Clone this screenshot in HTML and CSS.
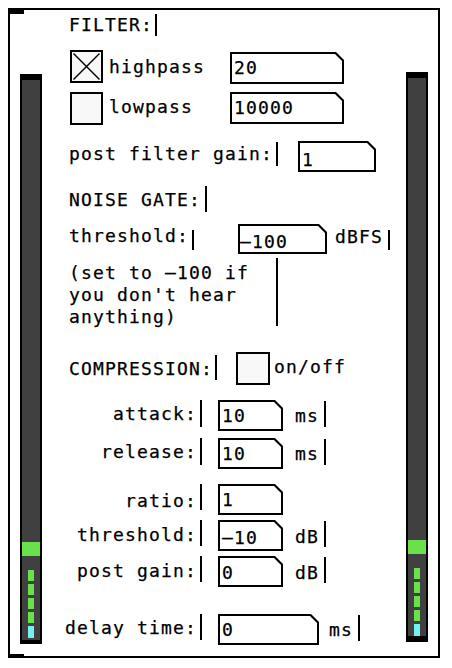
FILE: index.html
```html
<!DOCTYPE html>
<html>
<head>
<meta charset="utf-8">
<link rel="stylesheet" href="styles.css">
</head>
<body>
<div class="patch">
  <div class="frame"></div>

  <div class="vu vu-l">
    <div class="vu-peak"></div>
    <div class="vu-seg"></div>
    <div class="vu-seg"></div>
    <div class="vu-seg"></div>
    <div class="vu-seg"></div>
    <div class="vu-seg vu-low"></div>
  </div>
  <div class="vu vu-r">
    <div class="vu-peak"></div>
    <div class="vu-seg"></div>
    <div class="vu-seg"></div>
    <div class="vu-seg"></div>
    <div class="vu-seg"></div>
    <div class="vu-seg vu-low"></div>
  </div>

  <div class="cm c-filter">FILTER:</div>
  <div class="tg tg-hp"><svg viewBox="0 0 29 29" width="29" height="29"><line x1="1.5" y1="1.5" x2="27.5" y2="27.5"/><line x1="27.5" y1="1.5" x2="1.5" y2="27.5"/></svg></div>
  <div class="tx t-hp">highpass</div>
  <div class="nb nb-hp"><div class="nb-in">20</div></div>
  <div class="tg tg-lp"></div>
  <div class="tx t-lp">lowpass</div>
  <div class="nb nb-lp"><div class="nb-in">10000</div></div>

  <div class="cm c-pfg">post filter gain:</div>
  <div class="nb nb-pfg"><div class="nb-in">1</div></div>

  <div class="cm c-ng">NOISE GATE:</div>
  <div class="cm c-thr">threshold:</div>
  <div class="nb nb-thr"><div class="nb-in">–100</div></div>
  <div class="cm c-dbfs">dBFS</div>
  <div class="cm c-note">(set to –100 if
you don't hear
anything)</div>

  <div class="cm c-comp">COMPRESSION:</div>
  <div class="tg tg-comp"></div>
  <div class="tx t-onoff">on/off</div>

  <div class="cm rt c-att">attack:</div>
  <div class="nb nb-att"><div class="nb-in">10</div></div>
  <div class="cm c-att-ms">ms</div>

  <div class="cm rt c-rel">release:</div>
  <div class="nb nb-rel"><div class="nb-in">10</div></div>
  <div class="cm c-rel-ms">ms</div>

  <div class="cm rt c-ratio">ratio:</div>
  <div class="nb nb-ratio"><div class="nb-in">1</div></div>

  <div class="cm rt c-cthr">threshold:</div>
  <div class="nb nb-cthr"><div class="nb-in">–10</div></div>
  <div class="cm c-cthr-db">dB</div>

  <div class="cm rt c-pg">post gain:</div>
  <div class="nb nb-pg"><div class="nb-in">0</div></div>
  <div class="cm c-pg-db">dB</div>

  <div class="cm rt c-delay">delay time:</div>
  <div class="nb nb-delay"><div class="nb-in">0</div></div>
  <div class="cm c-delay-ms">ms</div>
</div>
</body>
</html>
```

FILE: styles.css
```css
* { box-sizing: border-box; }
html, body { margin: 0; padding: 0; background: #fff; }

.patch {
  position: relative;
  width: 452px;
  height: 668px;
  overflow: hidden;
  font-family: "DejaVu Sans Mono", monospace;
  font-size: 18px;
  line-height: 22px;
  letter-spacing: 1.16px;
  color: #000;
  -webkit-text-stroke: 0.25px #000;
}

/* graph-on-parent frame */
.frame {
  position: absolute;
  left: 8px; top: 8px;
  width: 432px; height: 650px;
  border: 2px solid #000;
}
.frame::before, .frame::after {
  content: "";
  position: absolute;
  left: -2px;
  width: 16px;
  background: #000;
}
.frame::before { top: -2px; height: 6px; }
.frame::after { bottom: -2px; height: 4px; }

/* VU meters */
.vu {
  position: absolute;
  width: 22px;
  height: 570px;
  background: #404040;
  border-left: 2px solid #000;
  border-right: 2px solid #000;
  border-top: 6px solid #000;
  display: flex;
  flex-direction: column;
  justify-content: flex-end;
  align-items: center;
  gap: 3px;
}
.vu-l { left: 20px; top: 74px; border-bottom: 4px solid #000; padding-bottom: 2px; }
.vu-r { left: 406px; top: 72px; border-bottom: 6px solid #000; padding-bottom: 0; }
.vu-peak {
  width: 18px;
  height: 14px;
  background: #6ae14a;
  margin-bottom: 11px;
}
.vu-seg { width: 6px; height: 11px; background: #6ae14a; }
.vu-seg.vu-low { height: 12px; background: #74f0f2; }

/* comments with width marker */
.cm {
  position: absolute;
  white-space: pre;
}
.cm::after {
  content: "";
  position: absolute;
  right: 0;
  width: 2px;
  top: var(--bt, 0px);
  height: var(--bh, 24px);
  background: #000;
}
.cm.rt { text-align: right; padding-right: 5px; }

.tx { position: absolute; white-space: pre; }

.c-filter { left: 69px; top: 14px; width: 88px; --bt: 0px; --bh: 22px; }
.c-pfg { left: 69px; top: 143px; width: 209px; --bt: -1px; --bh: 24px; }
.c-ng { left: 69px; top: 189px; width: 138px; --bt: -3px; --bh: 26px; }
.c-thr { left: 69px; top: 225px; width: 125px; --bt: 5px; --bh: 20px; }
.c-dbfs { left: 335px; top: 226px; width: 55px; --bt: 4px; --bh: 20px; }
.c-note { left: 69px; top: 262px; width: 209px; --bt: -4px; --bh: 68px; }
.c-comp { left: 69px; top: 358px; width: 148px; --bt: -3px; --bh: 25px; }

.c-att { left: 100px; top: 403px; width: 102px; --bt: -3px; --bh: 27px; }
.c-att-ms { left: 295px; top: 405px; width: 31px; --bt: -4px; --bh: 26px; }
.c-rel { left: 90px; top: 441px; width: 112px; --bt: -3px; --bh: 27px; }
.c-rel-ms { left: 295px; top: 443px; width: 31px; --bt: -4px; --bh: 26px; }
.c-ratio { left: 100px; top: 490px; width: 102px; --bt: -6px; --bh: 26px; }
.c-cthr { left: 60px; top: 524px; width: 142px; --bt: -4px; --bh: 26px; }
.c-cthr-db { left: 295px; top: 526px; width: 31px; --bt: -5px; --bh: 26px; }
.c-pg { left: 60px; top: 560px; width: 142px; --bt: -4px; --bh: 26px; }
.c-pg-db { left: 295px; top: 562px; width: 31px; --bt: -5px; --bh: 26px; }
.c-delay { left: 40px; top: 617px; width: 162px; --bt: -3px; --bh: 26px; }
.c-delay-ms { left: 329px; top: 619px; width: 31px; --bt: -4px; --bh: 26px; }

.t-hp { left: 109px; top: 56px; }
.t-lp { left: 109px; top: 96px; }
.t-onoff { left: 274px; top: 356px; }

/* toggles */
.tg {
  position: absolute;
  width: 33px;
  height: 33px;
  border: 2px solid #000;
  background: #f8f8f8;
}
.tg svg { display: block; }
.tg line { stroke: #000; stroke-width: 1.4; }
.tg-hp { left: 70px; top: 50px; }
.tg-lp { left: 70px; top: 92px; }
.tg-comp { left: 236px; top: 352px; width: 34px; }

/* number boxes */
.nb {
  position: absolute;
  background: #000;
  padding: 2px;
  clip-path: polygon(0 0, calc(100% - 8px) 0, 100% 8px, 100% 100%, 0 100%);
}
.nb-in {
  width: 100%;
  height: 100%;
  background: #fff;
  padding: 3px 0 0 2px;
  white-space: pre;
  clip-path: polygon(0 0, calc(100% - 7px) 0, 100% 7px, 100% 100%, 0 100%);
}
.nb-hp { left: 230px; top: 52px; width: 114px; height: 32px; }
.nb-lp { left: 230px; top: 92px; width: 114px; height: 32px; }
.nb-pfg { left: 298px; top: 141px; width: 78px; height: 31px; }
.nb-pfg .nb-in { padding-top: 6px; }
.nb-thr { left: 238px; top: 224px; width: 89px; height: 30px; }
.nb-thr .nb-in { padding-top: 5px; padding-left: 0; }
.nb-att { left: 218px; top: 400px; width: 65px; height: 31px; }
.nb-rel { left: 218px; top: 438px; width: 65px; height: 31px; }
.nb-ratio { left: 218px; top: 484px; width: 65px; height: 31px; }
.nb-cthr { left: 218px; top: 520px; width: 65px; height: 31px; }
.nb-cthr .nb-in { padding-top: 5px; }
.nb-pg { left: 218px; top: 556px; width: 65px; height: 31px; }
.nb-pg .nb-in { padding-top: 4px; }
.nb-delay { left: 218px; top: 614px; width: 101px; height: 31px; }
```
